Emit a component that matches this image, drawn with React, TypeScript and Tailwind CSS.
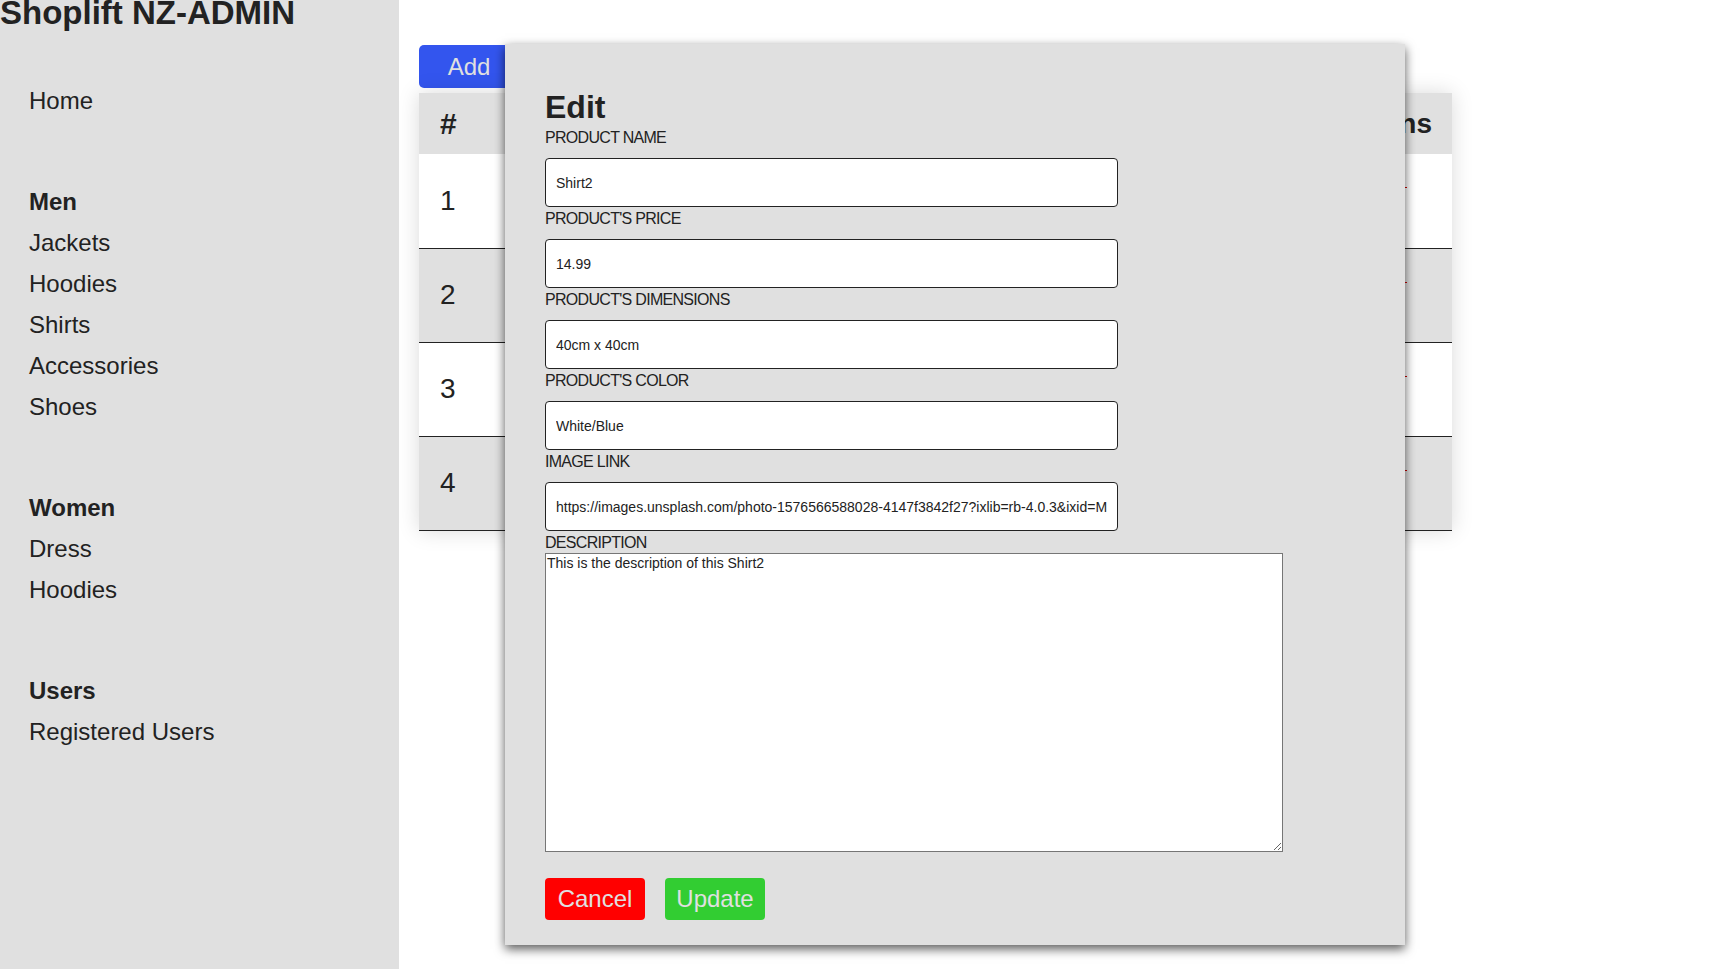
import React from "react";

const font = { fontFamily: '"Liberation Sans", Arial, sans-serif' };

function NavItem({ children, bold }: { children: React.ReactNode; bold?: boolean }) {
  return (
    <div className={`text-[24px] leading-[41px] text-[#222] ${bold ? "font-bold" : ""}`}>{children}</div>
  );
}

function Field({ label, value }: { label: string; value: string }) {
  return (
    <div className="flex flex-col">
      <div className="mt-[3px] text-[16px] leading-[18px] tracking-[-0.7px] text-[#222]">{label}</div>
      <input
        readOnly
        defaultValue={value}
        className="mt-[11px] h-[49px] w-[573px] rounded-[4px] border border-[#222] bg-white px-[10px] text-[14px] text-[#222] outline-none"
        style={font}
      />
    </div>
  );
}

const rows = [1, 2, 3, 4];

export default function App() {
  return (
    <div className="relative flex min-h-[969px] w-full bg-white" style={font}>
      {/* Sidebar */}
      <aside className="flex w-[399px] shrink-0 flex-col bg-[#e0e0e0]">
        <h1 className="-mt-[3px] text-[33px] font-bold leading-[32px] text-[#222]">Shoplift NZ-ADMIN</h1>
        <nav className="mt-[51px] flex flex-col pl-[29px]">
          <NavItem>Home</NavItem>
          <div className="mt-[60px]">
            <NavItem bold>Men</NavItem>
            <NavItem>Jackets</NavItem>
            <NavItem>Hoodies</NavItem>
            <NavItem>Shirts</NavItem>
            <NavItem>Accessories</NavItem>
            <NavItem>Shoes</NavItem>
          </div>
          <div className="mt-[60px]">
            <NavItem bold>Women</NavItem>
            <NavItem>Dress</NavItem>
            <NavItem>Hoodies</NavItem>
          </div>
          <div className="mt-[60px]">
            <NavItem bold>Users</NavItem>
            <NavItem>Registered Users</NavItem>
          </div>
        </nav>
      </aside>

      {/* Main */}
      <main className="flex flex-1 flex-col pl-[20px] pt-[45px]">
        <button className="h-[43px] w-[100px] rounded-[5px] bg-[#3355ee] text-[24px] text-[#e0e0e0]">Add</button>
        <table className="mt-[5px] w-[1033px] border-collapse shadow-[0_0_20px_rgba(0,0,0,0.15)]">
          <thead>
            <tr className="h-[61px] bg-[#e0e0e0]">
              <th className="pl-[21px] text-left text-[30px] font-bold text-[#222]">#</th>
              <th></th>
              <th className="pr-[20px] text-right text-[28px] font-bold text-[#222]">Actions</th>
            </tr>
          </thead>
          <tbody>
            {rows.map((n, i) => (
              <tr key={n} className={`h-[94px] border-b border-[#222] ${i % 2 === 0 ? "bg-white" : "bg-[#e0e0e0]"}`}>
                <td className="w-[120px] pl-[21px] text-[28px] text-[#222]">{n}</td>
                <td></td>
                <td className="relative w-[200px]">
                  <span className="absolute left-[153px] top-[33px] h-[1px] w-[2px] bg-[#cc0000]" />
                </td>
              </tr>
            ))}
          </tbody>
        </table>
      </main>

      {/* Modal */}
      <div className="absolute left-[505px] top-[44px] z-10 flex h-[901px] w-[900px] flex-col bg-[#e0e0e0] pl-[40px] pt-[47px] shadow-[0_4px_10px_rgba(0,0,0,0.65)]">
        <h2 className="text-[32px] font-bold leading-[32px] text-[#222]">Edit</h2>
        <div className="mt-[3px] flex flex-col">
          <Field label="PRODUCT NAME" value="Shirt2" />
          <Field label="PRODUCT'S PRICE" value="14.99" />
          <Field label="PRODUCT'S DIMENSIONS" value="40cm x 40cm" />
          <Field label="PRODUCT'S COLOR" value="White/Blue" />
          <Field
            label="IMAGE LINK"
            value="https://images.unsplash.com/photo-1576566588028-4147f3842f27?ixlib=rb-4.0.3&ixid=MnwxMjA3fDB8MHxwaG90by1wYWdlfHx8fGVufDB8fHx8"
          />
          <div className="mt-[3px] text-[16px] leading-[18px] tracking-[-0.7px] text-[#222]">DESCRIPTION</div>
          <textarea
            readOnly
            defaultValue="This is the description of this Shirt2"
            className="mt-[1px] h-[299px] w-[738px] border border-[#767676] bg-white p-[1px] text-[14px] leading-[16px] text-[#222] outline-none"
            style={font}
          />
        </div>
        <div className="mt-[26px] flex gap-[20px]">
          <button className="h-[42px] w-[100px] rounded-[4px] bg-[#ff0000] text-[24px] text-[#e0e0e0]">Cancel</button>
          <button className="h-[42px] w-[100px] rounded-[4px] bg-[#32cd32] text-[24px] text-[#e0e0e0]">Update</button>
        </div>
      </div>
    </div>
  );
}
